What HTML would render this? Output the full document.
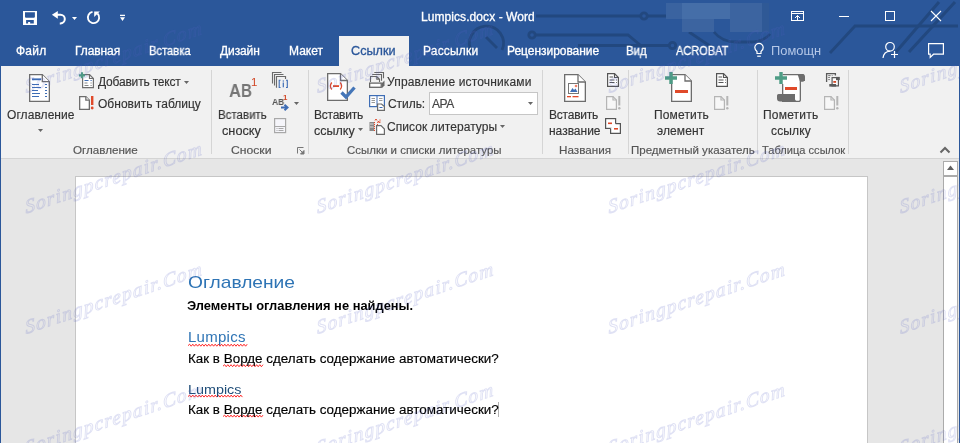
<!DOCTYPE html>
<html><head><meta charset="utf-8"><style>
html,body{margin:0;padding:0;width:960px;height:443px;overflow:hidden;position:relative;background:#e6e6e6;font-family:"Liberation Sans",sans-serif}
.tx{position:absolute;white-space:nowrap;font-family:"Liberation Sans",sans-serif;will-change:transform}
.a{position:absolute}

.sep{position:absolute;top:70px;width:1px;height:84px;background:#d5d5d5}
svg{position:absolute;overflow:visible}

</style></head><body>
<div class="a" style="left:0;top:0;width:960px;height:66px;background:#2b579a"></div>
<svg style="left:0;top:0" width="960" height="66" viewBox="0 0 960 66"><g fill="none" stroke="#22487f" stroke-width="2.8"><path d="M536 16H640.8 M647.2 16H666"/><circle cx="644" cy="16" r="3.2"/><circle cx="532" cy="35" r="3.2"/><path d="M535.2 35H628L645 49"/><path d="M578 45.5H669.3"/><circle cx="672.5" cy="45.5" r="3.2"/><path d="M689 32L710 46"/><path d="M714 32Q722 42 736 42H750Q764 42 770 34"/><path d="M830 53L855 26H958"/><path d="M896 52L939 2 M909 52L955 2" stroke-width="3"/><path d="M472 52A17 17 0 1 1 502 50"/><path d="M486 37L497 48"/></g></svg>
<div class="a" style="left:666px;top:3px;width:16px;height:16px;background:#3a63a0"></div>
<div class="a" style="left:682px;top:3px;width:48px;height:16px;background:#456ea8"></div>
<div class="a" style="left:682px;top:19px;width:32px;height:13px;background:#3c64a0"></div>
<div class="a" style="left:730px;top:3px;width:32px;height:29px;background:#3c64a0"></div>
<div class="a" style="left:762px;top:3px;width:7px;height:29px;background:#2f5996"></div>
<svg style="left:23px;top:11px" width="14" height="14" viewBox="0 0 14 14"><path fill="#fff" fill-rule="evenodd" d="M0 0H14V14H0Z M2 1.3H11.9V5.9L11.2 6.7H2.7L2 5.9Z M3.1 9H10.8V12.6H7.15V11H5.1V12.6H3.1Z"/></svg>
<svg style="left:49px;top:8px" width="20" height="20" viewBox="0 0 20 20"><path d="M2.9 6.8 L8.8 2.9 V10.8 Z" fill="#fff"/><path d="M8 6.8 H11.5 A4.3 4.3 0 0 1 11.5 15.4 H10.8" fill="none" stroke="#fff" stroke-width="2"/></svg>
<svg style="left:72px;top:16.5px" width="5" height="3" viewBox="0 0 5 3"><path d="M0 0H5L2.5 3Z" fill="#fff"/></svg>
<svg style="left:86px;top:10px" width="16" height="16" viewBox="0 0 16 16"><path d="M6.52 1.94 A5.65 5.65 0 1 0 11.5 3.5" fill="none" stroke="#fff" stroke-width="1.8"/><path d="M8.2 1.4 H13.8 L8.2 6.9Z" fill="#fff"/></svg>
<svg style="left:120px;top:14px" width="6" height="8" viewBox="0 0 6 8"><rect x="0" y="0.75" width="5" height="1.3" fill="#fff"/><path d="M0 3.2H5L2.5 7Z" fill="#fff"/></svg>
<svg style="left:790px;top:10px" width="16" height="12" viewBox="0 0 16 12"><rect x="1.5" y="1.5" width="12" height="9" fill="none" stroke="#fff" stroke-width="1"/><path d="M1.5 3.5H13.5" stroke="#fff" stroke-width="1"/><path d="M7.5 10.5V5.5 M5 8 L7.5 5.5 L10 8" fill="none" stroke="#fff" stroke-width="1"/></svg>
<div class="a" style="left:839px;top:16px;width:10px;height:1px;background:#fff"></div>
<svg style="left:884px;top:10px" width="12" height="12" viewBox="0 0 12 12"><rect x="1.5" y="1.5" width="9" height="9" fill="none" stroke="#fff" stroke-width="1"/></svg>
<svg style="left:930px;top:10px" width="12" height="12" viewBox="0 0 12 12"><path d="M1 1L11 11M11 1L1 11" stroke="#fff" stroke-width="1.1"/></svg>
<svg style="left:753px;top:42px" width="12" height="16" viewBox="0 0 12 16"><path d="M4 11.5 V9.5 C2.8 8.6 1.8 7.3 1.8 5.6 A4.2 4.2 0 0 1 10.2 5.6 C10.2 7.3 9.2 8.6 8 9.5 V11.5 Z" fill="none" stroke="#fff" stroke-width="1.2"/><path d="M4.2 14.2H7.8" stroke="#fff" stroke-width="1.2"/></svg>
<svg style="left:882px;top:41px" width="17" height="18" viewBox="0 0 17 18"><circle cx="8" cy="5.8" r="4.3" fill="none" stroke="#fff" stroke-width="1.2"/><path d="M1 17 C1.5 13 4 10.5 8 10.2" fill="none" stroke="#fff" stroke-width="1.2"/><path d="M12.5 10V17 M9 13.5H16" stroke="#fff" stroke-width="1.2"/></svg>
<svg style="left:927px;top:42px" width="18" height="17" viewBox="0 0 18 17"><path d="M1.6 1.6H16.4V12.2H6.5L3.2 15.4V12.2H1.6Z" fill="none" stroke="#fff" stroke-width="1.2"/></svg>
<div class="a" style="left:339px;top:36px;width:70px;height:30px;background:#f1f1f1"></div>
<div class="a" style="left:0;top:66px;width:960px;height:92px;background:#f1f1f1"></div>
<div class="a" style="left:0;top:158px;width:960px;height:1px;background:#d4d4d4"></div>
<div class="sep" style="left:211px"></div>
<div class="sep" style="left:308px"></div>
<div class="sep" style="left:542px"></div>
<div class="sep" style="left:628px"></div>
<div class="sep" style="left:757px"></div>
<div class="sep" style="left:848px"></div>
<svg style="left:29px;top:74px" width="21" height="28" viewBox="0 0 21 28"><path d="M0.65 0.65H13.3L20.35 7.7V27.35H0.65Z" fill="#fff" stroke="#6d6d6d" stroke-width="1.3"/><path d="M13.3 0.65V7.7H20.35" fill="#fff" stroke="#6d6d6d" stroke-width="1.3"/><rect x="3" y="4.4" width="9" height="1.8" fill="#3e6db5"/><rect x="3" y="10" width="7" height="1" fill="#3e6db5"/><rect x="16" y="10" width="2" height="1" fill="#3e6db5"/><rect x="3" y="13" width="9" height="1" fill="#3e6db5"/><rect x="16" y="13" width="2" height="1" fill="#3e6db5"/><rect x="3" y="16" width="6" height="1" fill="#3e6db5"/><rect x="16" y="16" width="2" height="1" fill="#3e6db5"/><rect x="3" y="19" width="8" height="1" fill="#3e6db5"/><rect x="16" y="19" width="2" height="1" fill="#3e6db5"/><rect x="3" y="22" width="7" height="1" fill="#3e6db5"/><rect x="16" y="22" width="2" height="1" fill="#3e6db5"/></svg>
<svg style="left:38px;top:129px" width="5" height="3" viewBox="0 0 5 3"><path d="M0 0H5L2.5 3Z" fill="#666"/></svg>
<svg style="left:78px;top:72px" width="17" height="17" viewBox="0 0 17 17"><path d="M4.6 2.6H11.5L15.4 6.5V15.6H4.6Z" fill="#fff" stroke="#6d6d6d" stroke-width="1.2"/><path d="M11.5 2.6V6.5H15.4" fill="none" stroke="#6d6d6d" stroke-width="1.2"/><rect x="6.5" y="8" width="4" height="1" fill="#3e6db5"/><rect x="12.5" y="8" width="1.2" height="1" fill="#3e6db5"/><rect x="6.5" y="10.5" width="3" height="1" fill="#888"/><rect x="12.5" y="10.5" width="1.2" height="1" fill="#888"/><rect x="6.5" y="13" width="4" height="1" fill="#888"/><rect x="12.5" y="13" width="1.2" height="1" fill="#888"/><path d="M4 0.3V6.3 M0.9 3.3H7.1" stroke="#4e9c85" stroke-width="2.2"/></svg>
<svg style="left:184px;top:81px" width="5" height="3" viewBox="0 0 5 3"><path d="M0 0H5L2.5 3Z" fill="#666"/></svg>
<svg style="left:79px;top:96px" width="11" height="14" viewBox="0 0 11 14"><path d="M0.65 0.65H6.85L10.35 4.15V13.35H0.65Z" fill="#fff" stroke="#6d6d6d" stroke-width="1.3"/><path d="M6.85 0.65V4.15H10.35" fill="#fff" stroke="#6d6d6d" stroke-width="1.3"/></svg>
<svg style="left:90px;top:96px" width="4" height="14" viewBox="0 0 4 14"><rect x="1" y="0" width="2.4" height="9" fill="#e04a2a"/><circle cx="2.2" cy="12" r="1.4" fill="#e04a2a"/></svg>
<svg style="left:271px;top:72px" width="18" height="16" viewBox="0 0 18 16"><path d="M1.5 11.5V0.5H10.5 M3.5 13.5V2.5H12.5 M5.5 15.5V4.5H14.5V6.5" fill="none" stroke="#6a6a6a" stroke-width="1.1"/><rect x="5.8" y="4.9" width="8" height="10" fill="#f1f1f1"/><path d="M5.5 15.5V4.5H14.5V7" fill="none" stroke="#6a6a6a" stroke-width="1.1"/><path d="M9.5 8.3H8.2V15.5H9.5 M15 8.3H16.3V15.5H15" fill="none" stroke="#3e6db5" stroke-width="1.1"/><rect x="11.7" y="8.4" width="1.2" height="1.2" fill="#3e6db5"/><rect x="11.7" y="10.5" width="1.2" height="4.8" fill="#3e6db5"/></svg>
<svg style="left:280px;top:104px" width="10" height="8" viewBox="0 0 10 8"><path d="M1 3.5H7.5 M4.5 0.8L7.5 3.5L4.5 6.2" fill="none" stroke="#3e6db5" stroke-width="2"/></svg>
<svg style="left:294px;top:102px" width="5" height="3" viewBox="0 0 5 3"><path d="M0 0H5L2.5 3Z" fill="#666"/></svg>
<svg style="left:274px;top:118px" width="13" height="15" viewBox="0 0 13 15"><rect x="0.6" y="0.6" width="11" height="14" fill="#f5f5fa" stroke="#a8a8a8" stroke-width="1.2"/><path d="M0.6 8.5H11.6" stroke="#a8a8a8" stroke-width="1"/><rect x="2.5" y="10" width="1" height="1" fill="#a8a8a8"/><rect x="4.5" y="10" width="5" height="1" fill="#a8a8a8"/><rect x="2.5" y="12" width="1" height="1" fill="#a8a8a8"/><rect x="4.5" y="12" width="5" height="1" fill="#a8a8a8"/></svg>
<svg style="left:297px;top:147px" width="8" height="7" viewBox="0 0 8 7"><path d="M0.5 6.5V0.5H6.5" fill="none" stroke="#777" stroke-width="1"/><path d="M2.5 2.5L6.5 6.5 M7 3.5V7H3.5Z" fill="#777" stroke="#777" stroke-width="1"/></svg>
<svg style="left:327px;top:73px" width="30" height="28" viewBox="0 0 30 28"><path d="M0.65 0.65H13.5L20.35 7.5V27.35H0.65Z" fill="#fff" stroke="#6d6d6d" stroke-width="1.3"/><path d="M13.5 0.65V7.5H20.35" fill="#fff" stroke="#6d6d6d" stroke-width="1.3"/><path d="M4.8 9.5C3.2 11.5 3.2 14.5 4.8 16.5 M13.2 9.5C14.8 11.5 14.8 14.5 13.2 16.5" fill="none" stroke="#e04a2a" stroke-width="1.3"/><rect x="6" y="12.2" width="6" height="1.8" fill="#e04a2a"/><rect x="13" y="17" width="14" height="8" fill="#f1f1f1" opacity="0"/><path d="M14.5 19.5L19 24L27.5 14.5" fill="none" stroke="#4576b8" stroke-width="3.3"/></svg>
<svg style="left:358px;top:128px" width="5" height="3" viewBox="0 0 5 3"><path d="M0 0H5L2.5 3Z" fill="#666"/></svg>
<svg style="left:369px;top:72px" width="17" height="17" viewBox="0 0 17 17"><path d="M5.3 0.5H14.5V6.3 M3.2 2.5H12.5V8.8 M1.5 10V4.5H7.8L10.5 7.3V10 M7.8 4.5V7.3H10.5" fill="none" stroke="#666" stroke-width="1.1"/><rect x="0.65" y="11.1" width="11.6" height="4.2" fill="#fff" stroke="#666" stroke-width="1.3"/><path d="M13 11L15.5 8.5V13.5L13 16Z" fill="#666"/></svg>
<svg style="left:369px;top:95px" width="17" height="16" viewBox="0 0 17 16"><rect x="0.6" y="0.6" width="14.8" height="11" fill="#fff" stroke="#3e6db5" stroke-width="1.2"/><path d="M8 0.6V11.6" stroke="#3e6db5" stroke-width="1"/><path d="M2.5 3.5H6 M2.5 5.5H6 M2.5 7.5H6 M10 3.5H13.5 M10 5.5H13.5" stroke="#999" stroke-width="1"/><path d="M8.6 9H12.5L15.4 11.5V15.4H8.6Z" fill="#fff" stroke="#6a6a6a" stroke-width="1.2"/><rect x="10.5" y="12" width="3" height="1" fill="#3e6db5"/></svg>
<svg style="left:369px;top:118px" width="17" height="17" viewBox="0 0 17 17"><rect x="0.5" y="4" width="4.5" height="9" fill="#888"/><path d="M1 6H4.5 M1 9H4.5" stroke="#ddd" stroke-width="1"/><path d="M6 2.5L7 1L8 2.5 M8.5 5L9.5 3L10.5 5" fill="none" stroke="#e04a2a" stroke-width="1"/><path d="M5.5 4V13 M8.5 6V12 M11 1.5V5" stroke="#e04a2a" stroke-width="1" stroke-dasharray="1.2 0.8"/><path d="M7.6 7.6H12L15.4 11V16.4H7.6Z" fill="#fff" stroke="#6a6a6a" stroke-width="1.2"/></svg>
<svg style="left:500px;top:125px" width="5" height="3" viewBox="0 0 5 3"><path d="M0 0H5L2.5 3Z" fill="#666"/></svg>
<div class="a" style="left:429px;top:92px;width:107px;height:21px;background:#fff;border:1px solid #c6c6c6"></div>
<svg style="left:528px;top:102px" width="5" height="3" viewBox="0 0 5 3"><path d="M0 0H5L2.5 3Z" fill="#666"/></svg>
<svg style="left:564px;top:74px" width="22" height="28" viewBox="0 0 22 28"><path d="M0.65 0.65H14L21.35 8V27.35H0.65Z" fill="#fff" stroke="#6d6d6d" stroke-width="1.3"/><path d="M14 0.65V8H21.35" fill="#fff" stroke="#6d6d6d" stroke-width="1.3"/><rect x="4.5" y="9.5" width="10" height="10" fill="#fff" stroke="#777" stroke-width="1"/><path d="M6 18L8.5 14L10 16L11.5 14.5L13.5 18Z" fill="#3e6db5"/><circle cx="12" cy="12" r="1.3" fill="#f0826a"/><rect x="3" y="22" width="4" height="1.3" fill="#e04a2a"/><rect x="8.5" y="22" width="6" height="1.3" fill="#e04a2a"/></svg>
<svg style="left:607px;top:73px" width="12" height="14" viewBox="0 0 12 14"><path d="M0.6 0.6H7.5L11.4 4.5V13.4H0.6Z" fill="#fff" stroke="#555" stroke-width="1.2"/><path d="M7.5 0.6V4.5H11.4" fill="none" stroke="#555" stroke-width="1.2"/><path d="M2.5 4H6 M2.5 7H7.5 M9 7H9.8 M2.5 9.5H7.5 M9 9.5H9.8" stroke="#555" stroke-width="1"/></svg>
<svg style="left:606px;top:96px" width="16" height="14" viewBox="0 0 16 14"><path d="M0.6 0.6H7L10.4 4V13.4H0.6Z" fill="#f7f7f7" stroke="#b5b5b5" stroke-width="1.2"/><path d="M7 0.6V4H10.4" fill="none" stroke="#b5b5b5" stroke-width="1.2"/><rect x="12.3" y="0" width="2" height="9.5" fill="#b5b5b5"/><circle cx="13.3" cy="12.2" r="1.2" fill="#b5b5b5"/></svg>
<svg style="left:605px;top:118px" width="17" height="16" viewBox="0 0 17 16"><rect x="0.6" y="0.6" width="10" height="9.8" fill="#fff" stroke="#555" stroke-width="1.2"/><rect x="3" y="4.5" width="4" height="1.6" fill="#e04a2a"/><path d="M10.6 5.6H15.4V15.4H5.6V10.4" fill="#fff" stroke="#555" stroke-width="1.2"/><rect x="9" y="10" width="4" height="1.6" fill="#e04a2a"/></svg>
<svg style="left:665px;top:72px" width="28" height="30" viewBox="0 0 28 30"><path d="M6.65 2.65H20L26.35 9V29.35H6.65Z" fill="#fff" stroke="#6d6d6d" stroke-width="1.3"/><path d="M20 2.65V9H26.35" fill="#fff" stroke="#6d6d6d" stroke-width="1.3"/><rect x="10" y="18" width="13" height="3" fill="#e04a2a"/><path d="M6 0V12 M0 6H12" stroke="#4e9c85" stroke-width="3.4"/></svg>
<svg style="left:716px;top:73px" width="12" height="14" viewBox="0 0 12 14"><path d="M0.6 0.6H7.5L11.4 4.5V13.4H0.6Z" fill="#fff" stroke="#555" stroke-width="1.2"/><path d="M7.5 0.6V4.5H11.4" fill="none" stroke="#555" stroke-width="1.2"/><path d="M2.5 4H6 M2.5 7H7.5 M9 7H9.8 M2.5 9.5H7.5 M9 9.5H9.8" stroke="#555" stroke-width="1"/></svg>
<svg style="left:714px;top:96px" width="16" height="14" viewBox="0 0 16 14"><path d="M0.6 0.6H7L10.4 4V13.4H0.6Z" fill="#f7f7f7" stroke="#b5b5b5" stroke-width="1.2"/><path d="M7 0.6V4H10.4" fill="none" stroke="#b5b5b5" stroke-width="1.2"/><rect x="12.3" y="0" width="2" height="9.5" fill="#b5b5b5"/><circle cx="13.3" cy="12.2" r="1.2" fill="#b5b5b5"/></svg>
<svg style="left:775px;top:72px" width="31" height="30" viewBox="0 0 31 30"><path d="M7.65 2.65H28V9H25.35V27.5" fill="none" stroke="#6d6d6d" stroke-width="1.3"/><path d="M8 2.65H25.35V28A1.5 1.5 0 0 1 23.5 29.35H7.65V12" fill="#fff" stroke="#6d6d6d" stroke-width="1.3"/><path d="M22.5 2H27A2.5 2.5 0 0 1 30 4.5V9H24.8Z" fill="#6d6d6d"/><path d="M3.5 22H20V27C20 28.5 21.5 29.5 23 29.5H5A3 3 0 0 1 2 26.5V23.5A1.5 1.5 0 0 1 3.5 22Z" fill="#6d6d6d"/><rect x="10" y="15" width="12" height="3" fill="#e04a2a"/><path d="M6 0V12 M0 6H12" stroke="#4e9c85" stroke-width="3.4"/></svg>
<svg style="left:825px;top:72px" width="16" height="16" viewBox="0 0 16 16"><path d="M1.6 9.9V1.6H10.4V3.6" fill="none" stroke="#5a5a5a" stroke-width="1.3"/><path d="M3.2 3.6H5.6 M6.8 3.6H7.6 M3.2 5.5H4.9 M3.2 7.6H4.9" stroke="#777" stroke-width="1"/><path d="M7.1 5.6H13.4V13.9H7.1Z" fill="#fff" stroke="#5a5a5a" stroke-width="1.2"/><rect x="11" y="4.9" width="3.8" height="3.2" fill="#5a5a5a"/><rect x="4.3" y="12" width="6.8" height="2.6" fill="#5a5a5a"/><rect x="8.3" y="9" width="2.8" height="1.8" fill="#d24726"/></svg>
<svg style="left:824px;top:96px" width="16" height="14" viewBox="0 0 16 14"><path d="M0.6 0.6H7L10.4 4V13.4H0.6Z" fill="#f7f7f7" stroke="#b5b5b5" stroke-width="1.2"/><path d="M7 0.6V4H10.4" fill="none" stroke="#b5b5b5" stroke-width="1.2"/><rect x="12.3" y="0" width="2" height="9.5" fill="#b5b5b5"/><circle cx="13.3" cy="12.2" r="1.2" fill="#b5b5b5"/></svg>
<div class="a" style="left:0;top:159px;width:960px;height:284px;background:#e6e6e6"></div>
<div class="a" style="left:75px;top:176px;width:791px;height:300px;background:#fff;border:1px solid #c6c6c6"></div>
<svg style="left:0;top:0" width="960" height="443"><path d="M188 345.7 L189.6 344.2 L191.2 346.2 L192.8 344.2 L194.4 346.2 L196.0 344.2 L197.6 346.2 L199.2 344.2 L200.8 346.2 L202.4 344.2 L204.0 346.2 L205.6 344.2 L207.2 346.2 L208.8 344.2 L210.4 346.2 L212.0 344.2 L213.6 346.2 L215.2 344.2 L216.8 346.2 L218.4 344.2 L220.0 346.2 L221.6 344.2 L223.2 346.2 L224.8 344.2 L226.4 346.2 L228.0 344.2 L229.6 346.2 L231.2 344.2 L232.8 346.2 L234.4 344.2 L236.0 346.2 L237.6 344.2 L239.2 346.2 L240.8 344.2 L242.4 346.2 L244.0 344.2 L245.6 346.2 L247.2 344.2" fill="none" stroke="#ff1010" stroke-width="0.9"/></svg>
<svg style="left:0;top:0" width="960" height="443"><path d="M223 366.2 L224.6 364.7 L226.2 366.7 L227.8 364.7 L229.4 366.7 L231.0 364.7 L232.6 366.7 L234.2 364.7 L235.8 366.7 L237.4 364.7 L239.0 366.7 L240.6 364.7 L242.2 366.7 L243.8 364.7 L245.4 366.7 L247.0 364.7 L248.6 366.7 L250.2 364.7 L251.8 366.7 L253.4 364.7 L255.0 366.7 L256.6 364.7 L258.2 366.7 L259.8 364.7 L261.4 366.7 L263.0 364.7" fill="none" stroke="#ff1010" stroke-width="0.9"/></svg>
<svg style="left:0;top:0" width="960" height="443"><path d="M188 396.6 L189.6 395.1 L191.2 397.1 L192.8 395.1 L194.4 397.1 L196.0 395.1 L197.6 397.1 L199.2 395.1 L200.8 397.1 L202.4 395.1 L204.0 397.1 L205.6 395.1 L207.2 397.1 L208.8 395.1 L210.4 397.1 L212.0 395.1 L213.6 397.1 L215.2 395.1 L216.8 397.1 L218.4 395.1 L220.0 397.1 L221.6 395.1 L223.2 397.1 L224.8 395.1 L226.4 397.1 L228.0 395.1 L229.6 397.1 L231.2 395.1 L232.8 397.1 L234.4 395.1 L236.0 397.1 L237.6 395.1 L239.2 397.1 L240.8 395.1 L242.4 397.1" fill="none" stroke="#ff1010" stroke-width="0.9"/></svg>
<svg style="left:0;top:0" width="960" height="443"><path d="M223 416.6 L224.6 415.1 L226.2 417.1 L227.8 415.1 L229.4 417.1 L231.0 415.1 L232.6 417.1 L234.2 415.1 L235.8 417.1 L237.4 415.1 L239.0 417.1 L240.6 415.1 L242.2 417.1 L243.8 415.1 L245.4 417.1 L247.0 415.1 L248.6 417.1 L250.2 415.1 L251.8 417.1 L253.4 415.1 L255.0 417.1 L256.6 415.1 L258.2 417.1 L259.8 415.1 L261.4 417.1 L263.0 415.1" fill="none" stroke="#ff1010" stroke-width="0.9"/></svg>
<div class="a" style="left:498px;top:402px;width:1px;height:15px;background:#b0b0b0"></div>
<div class="a" style="left:943px;top:161px;width:13px;height:13px;background:#fff;border:1px solid #ababab"></div>
<svg style="left:947px;top:165px" width="7" height="5" viewBox="0 0 7 5"><path d="M0 5 L3.5 0.5 L7 5 Z" fill="#606060"/></svg>
<div class="a" style="left:943px;top:176px;width:13px;height:300px;background:#fff;border:1px solid #ababab"></div>
<div class="a" style="left:0;top:66px;width:1px;height:377px;background:#2b579a"></div>
<div class="a" style="left:959px;top:66px;width:1px;height:377px;background:#2b579a"></div>
<svg style="left:939px;top:146px" width="12" height="8" viewBox="0 0 12 8"><path d="M1.5 6.5 L6 2 L10.5 6.5" fill="none" stroke="#666" stroke-width="2"/></svg>
<div class="tx" style="left:421.40px;top:11.00px;font-size:12px;line-height:12px;font-weight:400;color:#ffffff; -webkit-text-stroke:0.3px #ffffff;letter-spacing:0.072px">Lumpics.docx - Word</div>
<div class="tx" style="left:16.00px;top:45.00px;font-size:12px;line-height:12px;font-weight:400;color:#ffffff; -webkit-text-stroke:0.3px #ffffff;letter-spacing:0.250px">Файл</div>
<div class="tx" style="left:75.00px;top:45.00px;font-size:12px;line-height:12px;font-weight:400;color:#ffffff; -webkit-text-stroke:0.3px #ffffff;letter-spacing:-0.083px">Главная</div>
<div class="tx" style="left:148.57px;top:45.00px;font-size:12px;line-height:12px;font-weight:400;color:#ffffff; -webkit-text-stroke:0.3px #ffffff;transform:scaleX(0.932);transform-origin:0 0">Вставка</div>
<div class="tx" style="left:220.00px;top:45.00px;font-size:12px;line-height:12px;font-weight:400;color:#ffffff; -webkit-text-stroke:0.3px #ffffff;letter-spacing:-0.100px">Дизайн</div>
<div class="tx" style="left:288.50px;top:45.00px;font-size:12px;line-height:12px;font-weight:400;color:#ffffff; -webkit-text-stroke:0.3px #ffffff;letter-spacing:0.000px">Макет</div>
<div class="tx" style="left:351.25px;top:45.00px;font-size:12px;line-height:12px;font-weight:400;color:#2b579a; -webkit-text-stroke:0.3px #2b579a;transform:scaleX(1.055);transform-origin:0 0">Ссылки</div>
<div class="tx" style="left:423.25px;top:45.00px;font-size:12px;line-height:12px;font-weight:400;color:#ffffff; -webkit-text-stroke:0.3px #ffffff;letter-spacing:0.179px">Рассылки</div>
<div class="tx" style="left:506.50px;top:45.00px;font-size:12px;line-height:12px;font-weight:400;color:#ffffff; -webkit-text-stroke:0.3px #ffffff;letter-spacing:-0.038px">Рецензирование</div>
<div class="tx" style="left:626.05px;top:45.00px;font-size:12px;line-height:12px;font-weight:400;color:#ffffff; -webkit-text-stroke:0.3px #ffffff;transform:scaleX(0.952);transform-origin:0 0">Вид</div>
<div class="tx" style="left:676.00px;top:45.00px;font-size:12px;line-height:12px;font-weight:400;color:#ffffff; -webkit-text-stroke:0.3px #ffffff;transform:scaleX(0.918);transform-origin:0 0">ACROBAT</div>
<div class="tx" style="left:770.63px;top:45.00px;font-size:12px;line-height:12px;font-weight:400;color:#b4c7e7;transform:scaleX(1.073);transform-origin:0 0">Помощн</div>
<div class="tx" style="left:6.60px;top:109.00px;font-size:12px;line-height:12px;font-weight:400;color:#343434; -webkit-text-stroke:0.15px #343434;letter-spacing:0.067px">Оглавление</div>
<div class="tx" style="left:98.10px;top:76.00px;font-size:12px;line-height:12px;font-weight:400;color:#343434; -webkit-text-stroke:0.15px #343434;letter-spacing:-0.192px">Добавить текст</div>
<div class="tx" style="left:97.50px;top:98.00px;font-size:12px;line-height:12px;font-weight:400;color:#343434; -webkit-text-stroke:0.15px #343434;letter-spacing:0.017px">Обновить таблицу</div>
<div class="tx" style="left:73.39px;top:144.50px;font-size:10.5px;line-height:10.5px;font-weight:400;color:#555555; -webkit-text-stroke:0.15px #555555;transform:scaleX(1.107);transform-origin:0 0">Оглавление</div>
<div class="tx" style="left:217.64px;top:109.00px;font-size:12px;line-height:12px;font-weight:400;color:#343434; -webkit-text-stroke:0.15px #343434;transform:scaleX(0.959);transform-origin:0 0">Вставить</div>
<div class="tx" style="left:222.24px;top:125.00px;font-size:12px;line-height:12px;font-weight:400;color:#343434; -webkit-text-stroke:0.15px #343434;transform:scaleX(1.061);transform-origin:0 0">сноску</div>
<div class="tx" style="left:231.04px;top:144.50px;font-size:10.5px;line-height:10.5px;font-weight:400;color:#555555; -webkit-text-stroke:0.15px #555555;transform:scaleX(1.158);transform-origin:0 0">Сноски</div>
<div class="tx" style="left:314.40px;top:109.00px;font-size:12px;line-height:12px;font-weight:400;color:#343434; -webkit-text-stroke:0.15px #343434;letter-spacing:-0.243px">Вставить</div>
<div class="tx" style="left:314.36px;top:125.00px;font-size:12px;line-height:12px;font-weight:400;color:#343434; -webkit-text-stroke:0.15px #343434;transform:scaleX(1.042);transform-origin:0 0">ссылку</div>
<div class="tx" style="left:387.10px;top:76.00px;font-size:12px;line-height:12px;font-weight:400;color:#343434; -webkit-text-stroke:0.15px #343434;letter-spacing:0.152px">Управление источниками</div>
<div class="tx" style="left:387.70px;top:97.70px;font-size:12px;line-height:12px;font-weight:400;color:#343434; -webkit-text-stroke:0.15px #343434;letter-spacing:-0.060px">Стиль:</div>
<div class="tx" style="left:432.30px;top:97.70px;font-size:12px;line-height:12px;font-weight:400;color:#444444; -webkit-text-stroke:0.15px #444444;letter-spacing:-0.400px">APA</div>
<div class="tx" style="left:387.10px;top:121.00px;font-size:12px;line-height:12px;font-weight:400;color:#343434; -webkit-text-stroke:0.15px #343434;letter-spacing:0.081px">Список литературы</div>
<div class="tx" style="left:347.21px;top:144.50px;font-size:10.5px;line-height:10.5px;font-weight:400;color:#555555; -webkit-text-stroke:0.15px #555555;transform:scaleX(1.092);transform-origin:0 0">Ссылки и списки литературы</div>
<div class="tx" style="left:549.20px;top:109.00px;font-size:12px;line-height:12px;font-weight:400;color:#343434; -webkit-text-stroke:0.15px #343434;letter-spacing:-0.214px">Вставить</div>
<div class="tx" style="left:548.50px;top:125.00px;font-size:12px;line-height:12px;font-weight:400;color:#343434; -webkit-text-stroke:0.15px #343434;letter-spacing:-0.014px">название</div>
<div class="tx" style="left:559.49px;top:144.50px;font-size:10.5px;line-height:10.5px;font-weight:400;color:#555555; -webkit-text-stroke:0.15px #555555;transform:scaleX(1.111);transform-origin:0 0">Названия</div>
<div class="tx" style="left:653.60px;top:109.00px;font-size:12px;line-height:12px;font-weight:400;color:#343434; -webkit-text-stroke:0.15px #343434;letter-spacing:0.143px">Пометить</div>
<div class="tx" style="left:656.80px;top:125.00px;font-size:12px;line-height:12px;font-weight:400;color:#343434; -webkit-text-stroke:0.15px #343434;letter-spacing:0.100px">элемент</div>
<div class="tx" style="left:631.30px;top:144.50px;font-size:10.5px;line-height:10.5px;font-weight:400;color:#555555; -webkit-text-stroke:0.15px #555555;transform:scaleX(1.098);transform-origin:0 0">Предметный указатель</div>
<div class="tx" style="left:763.30px;top:109.00px;font-size:12px;line-height:12px;font-weight:400;color:#343434; -webkit-text-stroke:0.15px #343434;letter-spacing:0.200px">Пометить</div>
<div class="tx" style="left:770.50px;top:125.00px;font-size:12px;line-height:12px;font-weight:400;color:#343434; -webkit-text-stroke:0.15px #343434;letter-spacing:0.160px">ссылку</div>
<div class="tx" style="left:761.50px;top:144.50px;font-size:10.5px;line-height:10.5px;font-weight:400;color:#555555; -webkit-text-stroke:0.15px #555555;transform:scaleX(1.056);transform-origin:0 0">Таблица ссылок</div>
<div class="tx" style="left:187.62px;top:273.50px;font-size:17px;line-height:17px;font-weight:400;color:#2e74b5;transform:scaleX(1.129);transform-origin:0 0">Оглавление</div>
<div class="tx" style="left:186.95px;top:300.00px;font-size:12.3px;line-height:12.3px;font-weight:700;color:#000000;transform:scaleX(1.047);transform-origin:0 0">Элементы оглавления не найдены.</div>
<div class="tx" style="left:187.60px;top:329.00px;font-size:15px;line-height:15px;font-weight:400;color:#2e74b5;letter-spacing:0.267px">Lumpics</div>
<div class="tx" style="left:188.11px;top:353.00px;font-size:12.3px;line-height:12.3px;font-weight:400;color:#000000; -webkit-text-stroke:0.15px #000000;transform:scaleX(1.091);transform-origin:0 0">Как в Ворде сделать содержание автоматически?</div>
<div class="tx" style="left:187.55px;top:383.00px;font-size:13.7px;line-height:13.7px;font-weight:400;color:#1f4d78;transform:scaleX(1.049);transform-origin:0 0">Lumpics</div>
<div class="tx" style="left:188.11px;top:404.00px;font-size:12.3px;line-height:12.3px;font-weight:400;color:#000000; -webkit-text-stroke:0.15px #000000;transform:scaleX(1.091);transform-origin:0 0">Как в Ворде сделать содержание автоматически?</div>
<div class="tx" style="left:229.01px;top:82.00px;font-size:18.5px;line-height:18.5px;font-weight:700;color:#767676;transform:scaleX(0.892);transform-origin:0 0">A</div>
<div class="tx" style="left:241.38px;top:82.00px;font-size:18.5px;line-height:18.5px;font-weight:700;color:#767676;transform:scaleX(0.817);transform-origin:0 0">B</div>
<div class="tx" style="left:251.30px;top:77.00px;font-size:11.5px;line-height:11.5px;font-weight:400;color:#d24726;letter-spacing:0.000px">1</div>
<div class="tx" style="left:272.20px;top:97.70px;font-size:9px;line-height:9px;font-weight:700;color:#555555;transform:scaleX(0.938);transform-origin:0 0">AB</div>
<div class="tx" style="left:283.47px;top:94.00px;font-size:7px;line-height:7px;font-weight:700;color:#d24726;transform:scaleX(1.133);transform-origin:0 0">1</div>
<svg style="left:0;top:0" width="960" height="443" viewBox="0 0 960 443"><g font-family="Liberation Serif" font-style="italic" font-size="20" letter-spacing="1.4" fill="none" stroke="rgba(85,95,195,0.19)" stroke-width="1"><text transform="translate(26.0 93.0) rotate(-18.5) skewX(-12) scale(1 0.96)" x="0" y="0">Soringpcrepair.Com</text><text transform="translate(317.5 93.0) rotate(-18.5) skewX(-12) scale(1 0.96)" x="0" y="0">Soringpcrepair.Com</text><text transform="translate(609.0 93.0) rotate(-18.5) skewX(-12) scale(1 0.96)" x="0" y="0">Soringpcrepair.Com</text><text transform="translate(900.5 93.0) rotate(-18.5) skewX(-12) scale(1 0.96)" x="0" y="0">Soringpcrepair.Com</text><text transform="translate(26.0 213.5) rotate(-18.5) skewX(-12) scale(1 0.96)" x="0" y="0">Soringpcrepair.Com</text><text transform="translate(317.5 213.5) rotate(-18.5) skewX(-12) scale(1 0.96)" x="0" y="0">Soringpcrepair.Com</text><text transform="translate(609.0 213.5) rotate(-18.5) skewX(-12) scale(1 0.96)" x="0" y="0">Soringpcrepair.Com</text><text transform="translate(900.5 213.5) rotate(-18.5) skewX(-12) scale(1 0.96)" x="0" y="0">Soringpcrepair.Com</text><text transform="translate(26.0 334.0) rotate(-18.5) skewX(-12) scale(1 0.96)" x="0" y="0">Soringpcrepair.Com</text><text transform="translate(317.5 334.0) rotate(-18.5) skewX(-12) scale(1 0.96)" x="0" y="0">Soringpcrepair.Com</text><text transform="translate(609.0 334.0) rotate(-18.5) skewX(-12) scale(1 0.96)" x="0" y="0">Soringpcrepair.Com</text><text transform="translate(900.5 334.0) rotate(-18.5) skewX(-12) scale(1 0.96)" x="0" y="0">Soringpcrepair.Com</text><text transform="translate(26.0 454.5) rotate(-18.5) skewX(-12) scale(1 0.96)" x="0" y="0">Soringpcrepair.Com</text><text transform="translate(317.5 454.5) rotate(-18.5) skewX(-12) scale(1 0.96)" x="0" y="0">Soringpcrepair.Com</text><text transform="translate(609.0 454.5) rotate(-18.5) skewX(-12) scale(1 0.96)" x="0" y="0">Soringpcrepair.Com</text><text transform="translate(900.5 454.5) rotate(-18.5) skewX(-12) scale(1 0.96)" x="0" y="0">Soringpcrepair.Com</text></g></svg>
</body></html>
